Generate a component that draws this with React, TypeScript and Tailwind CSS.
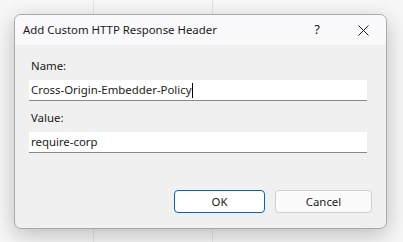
import React from 'react';

const App: React.FC = () => {
  return (
    <div className="relative w-[403px] h-[242px] bg-[#f7f7f7] overflow-hidden" style={{ fontFamily: '"Noto Sans", "Open Sans", sans-serif' }}>
      {/* background app columns */}
      <div className="absolute top-0 bottom-0 left-[93px] w-px bg-[#e4e4e4]" />
      <div className="absolute top-0 bottom-0 left-[212px] w-px bg-[#e4e4e4]" />

      <div className="relative ml-[14px] mt-[14px] w-[373px] h-[215px] rounded-[7px] border border-[#a9a9a9] bg-[#f0f0f0] shadow-[0_6px_22px_rgba(0,0,0,0.24)] overflow-hidden flex flex-col">
        <div className="h-[30px] bg-[#f9f9fb] flex items-center pl-[8px] text-[11.4px] text-[#1a1a1a]">
          <span className="flex-1">Add Custom HTTP Response Header</span>
          <span className="w-[46px] text-center text-[13px]">?</span>
          <span className="w-[46px] flex justify-center">
            <svg width="11" height="11" viewBox="0 0 11 11" fill="none" stroke="#1a1a1a" strokeWidth="1">
              <path d="M0.5 0.5 L10.5 10.5 M10.5 0.5 L0.5 10.5" />
            </svg>
          </span>
        </div>

        <div className="flex-1 flex flex-col px-[14px] pt-[13px] text-[11.4px] text-[#1a1a1a]">
          <div className="flex flex-col pr-[5px]">
            <div className="pl-[2px] leading-[16px]">Name:</div>
            <div className="mt-[6px] h-[21px] bg-white border-b border-[#8a8a8a] flex items-center pl-[2px]">
              <span>Cross-Origin-Embedder-Policy</span>
              <span className="w-px h-[15px] bg-black" />
            </div>
            <div className="mt-[9px] pl-[2px] leading-[16px]">Value:</div>
            <div className="mt-[6px] h-[21px] bg-white border-b border-[#8a8a8a] flex items-center pl-[2px]">
              <span>require-corp</span>
            </div>
          </div>

          <div className="mt-[37px] flex justify-end gap-[10px]">
            <button className="w-[91px] h-[23px] rounded-[4px] border border-[#0067c0] bg-white text-[11.4px] text-[#1a1a1a]">OK</button>
            <button className="w-[97px] h-[23px] rounded-[4px] border border-[#d0d0d0] bg-[#fbfbfb] text-[11.4px] text-[#1a1a1a]">Cancel</button>
          </div>
        </div>
      </div>
    </div>
  );
};

export default App;
